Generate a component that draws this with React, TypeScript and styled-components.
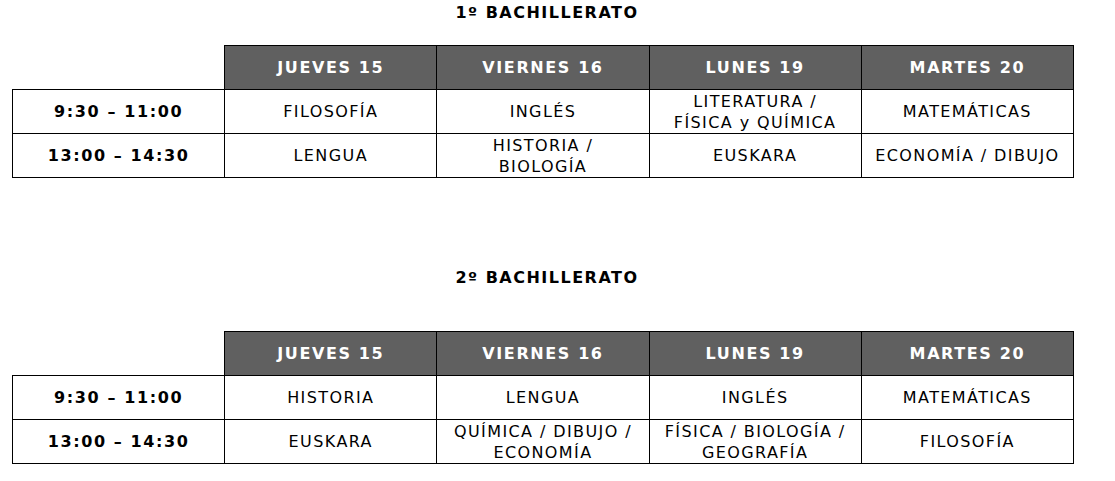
import React from "react";
import styled, { createGlobalStyle } from "styled-components";

const GlobalStyle = createGlobalStyle`
  body {
    margin: 0;
    background: #ffffff;
    font-family: "DejaVu Sans", Verdana, sans-serif;
  }
`;

interface Schedule {
  title: string;
  days: string[];
  rows: { time: string; subjects: string[][] }[];
}

const schedules: Schedule[] = [
  {
    title: "1º BACHILLERATO",
    days: ["JUEVES 15", "VIERNES 16", "LUNES 19", "MARTES 20"],
    rows: [
      {
        time: "9:30 – 11:00",
        subjects: [
          ["FILOSOFÍA"],
          ["INGLÉS"],
          ["LITERATURA /", "FÍSICA y QUÍMICA"],
          ["MATEMÁTICAS"],
        ],
      },
      {
        time: "13:00 – 14:30",
        subjects: [
          ["LENGUA"],
          ["HISTORIA /", "BIOLOGÍA"],
          ["EUSKARA"],
          ["ECONOMÍA / DIBUJO"],
        ],
      },
    ],
  },
  {
    title: "2º BACHILLERATO",
    days: ["JUEVES 15", "VIERNES 16", "LUNES 19", "MARTES 20"],
    rows: [
      {
        time: "9:30 – 11:00",
        subjects: [["HISTORIA"], ["LENGUA"], ["INGLÉS"], ["MATEMÁTICAS"]],
      },
      {
        time: "13:00 – 14:30",
        subjects: [
          ["EUSKARA"],
          ["QUÍMICA / DIBUJO /", "ECONOMÍA"],
          ["FÍSICA / BIOLOGÍA /", "GEOGRAFÍA"],
          ["FILOSOFÍA"],
        ],
      },
    ],
  },
];

const App = () => {
  return (
    <>
      <GlobalStyle />
      <Page>
        {schedules.map((s, i) => (
          <Section key={s.title} $first={i === 0}>
            <Title $first={i === 0}>{s.title}</Title>
            <Table>
              <colgroup>
                {[0, 1, 2, 3, 4].map((c) => (
                  <col key={c} style={{ width: 212 }} />
                ))}
              </colgroup>
              <thead>
                <tr>
                  <EmptyCell />
                  {s.days.map((d) => (
                    <HeadCell key={d}>{d}</HeadCell>
                  ))}
                </tr>
              </thead>
              <tbody>
                {s.rows.map((r) => (
                  <tr key={r.time}>
                    <TimeCell>{r.time}</TimeCell>
                    {r.subjects.map((lines, k) => (
                      <Cell key={k}>
                        {lines.map((l, n) => (
                          <React.Fragment key={n}>
                            {n > 0 && <br />}
                            {l}
                          </React.Fragment>
                        ))}
                      </Cell>
                    ))}
                  </tr>
                ))}
              </tbody>
            </Table>
          </Section>
        ))}
      </Page>
    </>
  );
};

export default App;

const Page = styled.div`
  padding: 0 0 0 12px;
  width: 1062px;
`;

const Section = styled.section<{ $first: boolean }>`
  margin-top: ${(p) => (p.$first ? "4px" : "91px")};
`;

const Title = styled.h2<{ $first: boolean }>`
  margin: 0 0 ${(p) => (p.$first ? "24px" : "45px")};
  height: 17px;
  line-height: 17px;
  text-align: center;
  font-size: 16px;
  letter-spacing: 1.5px;
  font-weight: bold;
  color: #000;
  padding-left: 8px;
`;

const Table = styled.table`
  border-collapse: collapse;
  table-layout: fixed;
  width: 1062px;
  font-size: 16px;
  letter-spacing: 1.4px;
  color: #000;
`;

const EmptyCell = styled.th`
  border: none;
  padding: 0;
`;

const HeadCell = styled.th`
  background: #606060;
  color: #ffffff;
  font-weight: bold;
  border: 1px solid #000;
  height: 43px;
  padding: 0;
  text-align: center;
  letter-spacing: 1.6px;
`;

const Cell = styled.td`
  border: 1px solid #000;
  height: 43px;
  padding: 0;
  text-align: center;
  vertical-align: middle;
  line-height: 21px;
`;

const TimeCell = styled(Cell)`
  font-weight: bold;
  letter-spacing: 1.6px;
`;
